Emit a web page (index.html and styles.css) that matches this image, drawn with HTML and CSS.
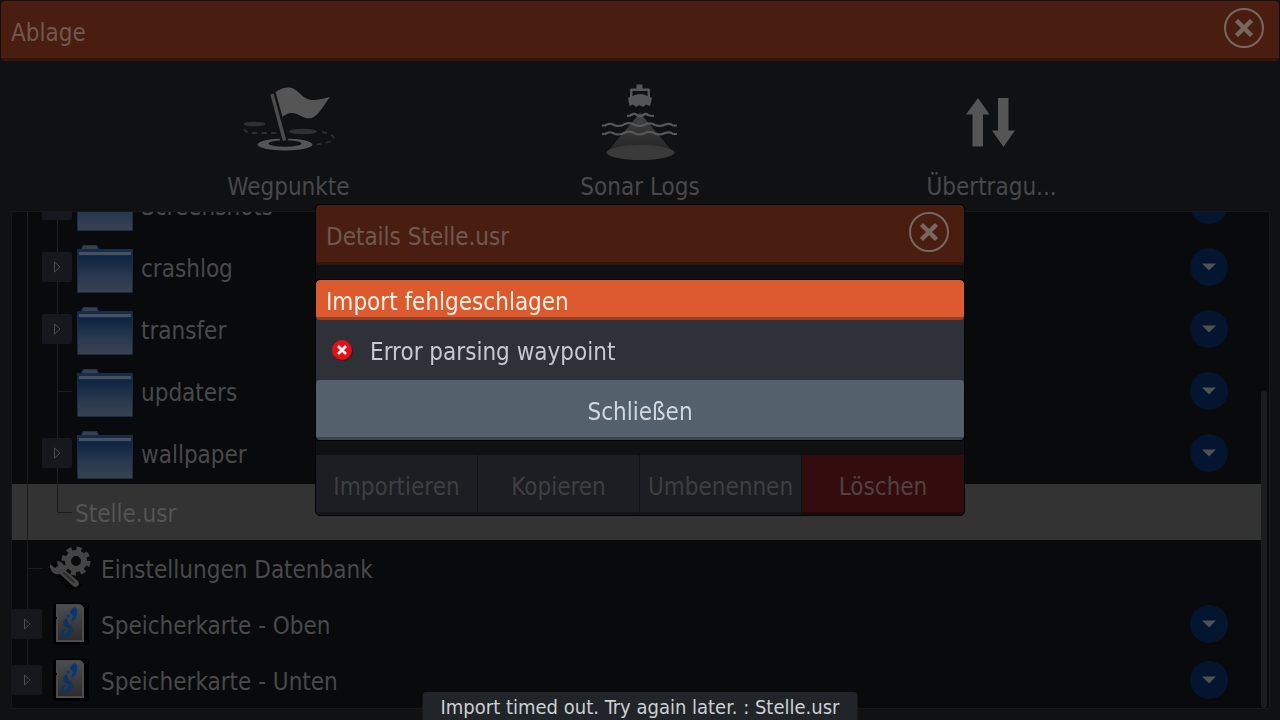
FILE: index.html
```html
<!doctype html>
<html lang="de">
  <head>
    <meta charset="UTF-8" />
    <meta name="viewport" content="width=device-width, initial-scale=1.0" />
    <title>Ablage</title>
    <link rel="stylesheet" href="styles.css" />
  </head>
  <body>
    <svg class="sprite" aria-hidden="true">
      <defs>
        <linearGradient id="folderFill" x1="0" y1="0" x2="0" y2="1">
          <stop offset="0" stop-color="#0d2442" />
          <stop offset="0.6" stop-color="#2b3a50" />
          <stop offset="1" stop-color="#39424f" />
        </linearGradient>
        <linearGradient id="cardFill" x1="0" y1="0" x2="0" y2="1">
          <stop offset="0" stop-color="#4d4d4d" />
          <stop offset="1" stop-color="#2b2b2b" />
        </linearGradient>
        <linearGradient id="beamFill" x1="0" y1="0" x2="0" y2="1">
          <stop offset="0" stop-color="#444444" />
          <stop offset="1" stop-color="#242425" />
        </linearGradient>
      </defs>
      <symbol id="close" viewBox="0 0 40 40">
        <circle cx="20" cy="20" r="19" fill="none" stroke="currentColor" stroke-width="2" />
        <path d="M12.500 12.500L27.500 27.500M27.500 12.500L12.500 27.500" stroke="currentColor" stroke-width="4.500" />
      </symbol>
      <symbol id="triangle" viewBox="0 0 8 12">
        <path d="M1.500 1L7 6L1.500 11Z" fill="none" stroke="currentColor" />
      </symbol>
      <symbol id="folder" viewBox="0 0 56 50">
        <path d="M4 5L6 1H20L22 5Z" fill="#253447" />
        <path d="M7 2H19L21 5H5Z" fill="#37424f" />
        <rect x="0" y="5" width="56" height="44" rx="1" fill="#182c47" />
        <rect x="2" y="8" width="52" height="3" fill="#46515f" />
        <rect x="1" y="12" width="54" height="36" fill="url(#folderFill)" />
      </symbol>
      <symbol id="card" viewBox="0 0 46 44">
        <rect x="6" y="1" width="36" height="42" rx="4" fill="#000" />
        <path d="M10 3H33L36 6V39H10V18L11 17V15L10 14Z" fill="url(#cardFill)" stroke="#4b4b4b" stroke-width="2" />
        <path d="M25 7C28 4 31 6 30 11C30 15 28 19 24 20C25 16 27 13 24 12C22 11 23 8 25 7Z" fill="#06397c" />
        <path d="M19 17C17 19 16 22 18 24C20 26 24 25 23 28C22 31 18 32 16 35C20 34 24 33 25 29C27 24 19 23 20 20Z" fill="#0a3564" stroke="#0a3564" stroke-width="1.500" />
        <circle cx="21" cy="14" r="1.800" fill="#0a3a75" />
        <path d="M17 28L15 32" stroke="#0a3564" stroke-width="2.500" stroke-linecap="round" />
      </symbol>
      <symbol id="down" viewBox="0 0 14 8">
        <path d="M0 0.500H14L7 7.500Z" fill="currentColor" />
      </symbol>
    </svg>

    <header class="bar">
      <h1 class="title">Ablage</h1>
      <button class="close" aria-label="Ablage beenden"><svg><use href="#close" /></svg></button>
    </header>

    <nav class="toolbar">
      <button class="tool">
        <svg viewBox="240 82 96 80">
          <ellipse cx="254.500" cy="124" rx="11" ry="2.300" fill="#303031" />
          <ellipse cx="303" cy="131.500" rx="14" ry="2.800" fill="#303031" />
          <path d="M244 129Q246 133 253 133H281M322 132Q334 134 334 139Q331 143 312 145" fill="none" stroke="#303031" stroke-width="1.800" stroke-dasharray="5 4.500" />
          <path fill-rule="evenodd" d="M257.500 144.500a27.500 6 0 1 0 55 0a27.500 6 0 1 0 -55 0ZM268.500 143.500a16.500 3.200 0 1 0 33 0a16.500 3.200 0 1 0 -33 0Z" fill="#555556" />
          <path d="M272 94L284.500 141" stroke="#101112" stroke-width="8" />
          <path d="M272 94L284.500 140.500" stroke="#4b4b4c" stroke-width="3.500" />
          <path d="M275.500 92C281 88 289 86 294 89C301 93 303 99 312 100C318 100 325 98 330 97C325 103 320 114 312 118C303 120 299 112 290 113C287 114 284 115 282.500 117Z" fill="#555556" />
        </svg>
        <span>Wegpunkte</span>
      </button>
      <button class="tool">
        <svg viewBox="592 82 96 80">
          <path d="M640 113L673 152H607Z" fill="url(#beamFill)" />
          <ellipse cx="640.500" cy="152.500" rx="34" ry="7.500" fill="#3a3a3b" />
          <path d="M636.500 84.500H642.500V88.500H649Q650 88.500 650 90V97L652 98L650 106L646 104.500L643 107L639.500 105L636 107L633 104.500L629.500 106L628 98L630 97V90Q630 88.500 631 88.500H636.500ZM632.500 91V96Q640 92 647.500 96V91Z" fill="#565657" fill-rule="evenodd" />
          <path d="M627 116Q630 116 632 114.500Q634 113 637 115Q640 117 643 115Q646 113 648 115Q650 116 654 116M602 125.500H605Q610 122 615 125.500Q620 127 625 124Q630 122 635 125Q640 127 645 124.500Q650 122 655 125Q660 127 665 124.500Q670 123 673 125.500H677M602 134H605Q610 130.500 615 134Q620 135.500 625 132.500Q630 130.500 635 133.500Q640 135.500 645 133Q650 130.500 655 133.500Q660 135.500 665 133Q670 131.500 673 134H677" fill="none" stroke="#58585a" stroke-width="2.200" />
        </svg>
        <span>Sonar Logs</span>
      </button>
      <button class="tool">
        <svg viewBox="944 82 96 80">
          <path d="M978 98L989.500 114.500H983V146.500H972.500V114.500H966ZM998 98H1008.500V130.500H1015L1003.500 147L992 130.500H998Z" fill="#555556" />
        </svg>
        <span>Übertragu...</span>
      </button>
    </nav>

    <main class="browser">
      <ul class="tree">
        <li class="row folder-row">
          <span class="branch line"></span>
          <span class="branch line"><button class="expand" aria-label="Screenshots öffnen"><svg><use href="#triangle" /></svg></button></span>
          <svg class="folder"><use href="#folder" /></svg>
          <span class="name">Screenshots</span>
          <button class="menu" aria-label="Menü Screenshots"><svg><use href="#down" /></svg></button>
        </li>
        <li class="row folder-row">
          <span class="branch line"></span>
          <span class="branch line"><button class="expand" aria-label="crashlog öffnen"><svg><use href="#triangle" /></svg></button></span>
          <svg class="folder"><use href="#folder" /></svg>
          <span class="name">crashlog</span>
          <button class="menu" aria-label="Menü crashlog"><svg><use href="#down" /></svg></button>
        </li>
        <li class="row folder-row">
          <span class="branch line"></span>
          <span class="branch line"><button class="expand" aria-label="transfer öffnen"><svg><use href="#triangle" /></svg></button></span>
          <svg class="folder"><use href="#folder" /></svg>
          <span class="name">transfer</span>
          <button class="menu" aria-label="Menü transfer"><svg><use href="#down" /></svg></button>
        </li>
        <li class="row folder-row">
          <span class="branch line"></span>
          <span class="branch line tick"></span>
          <svg class="folder"><use href="#folder" /></svg>
          <span class="name">updaters</span>
          <button class="menu" aria-label="Menü updaters"><svg><use href="#down" /></svg></button>
        </li>
        <li class="row folder-row">
          <span class="branch line"></span>
          <span class="branch line"><button class="expand" aria-label="wallpaper öffnen"><svg><use href="#triangle" /></svg></button></span>
          <svg class="folder"><use href="#folder" /></svg>
          <span class="name">wallpaper</span>
          <button class="menu" aria-label="Menü wallpaper"><svg><use href="#down" /></svg></button>
        </li>
        <li class="row selected">
          <span class="branch line"></span>
          <span class="branch tick last"></span>
          <span class="name">Stelle.usr</span>
        </li>
        <li class="row">
          <span class="branch line tick"></span>
          <svg class="icon" viewBox="0 0 46 44">
            <path d="M6 19L31 43" stroke="#000" stroke-width="12" opacity="0.6" />
            <circle cx="29" cy="15" r="8" fill="none" stroke="#444" stroke-width="6" />
            <circle cx="29" cy="15" r="12" fill="none" stroke="#444" stroke-width="5" stroke-dasharray="5 4.425" />
            <path d="M3 18L8 22L11 20L10 15C15 15 18 19 17 23L31 35C34 39 29 43 26 40L13 28C8 30 2 25 3 18Z" fill="#444" />
            <path d="M17 27L27 36" stroke="#292929" stroke-width="2" stroke-linecap="round" />
          </svg>
          <span class="name">Einstellungen Datenbank</span>
        </li>
        <li class="row">
          <span class="branch line"><button class="expand" aria-label="Speicherkarte - Oben öffnen"><svg><use href="#triangle" /></svg></button></span>
          <svg class="icon"><use href="#card" /></svg>
          <span class="name">Speicherkarte - Oben</span>
          <button class="menu" aria-label="Menü Speicherkarte - Oben"><svg><use href="#down" /></svg></button>
        </li>
        <li class="row">
          <span class="branch last"><button class="expand" aria-label="Speicherkarte - Unten öffnen"><svg><use href="#triangle" /></svg></button></span>
          <svg class="icon"><use href="#card" /></svg>
          <span class="name">Speicherkarte - Unten</span>
          <button class="menu" aria-label="Menü Speicherkarte - Unten"><svg><use href="#down" /></svg></button>
        </li>
      </ul>
      <div class="scrollbar"><div class="thumb"></div></div>
    </main>

    <div class="overlay">
      <section class="dialog details" role="dialog" aria-labelledby="detailsTitle">
        <header class="bar">
          <h2 class="title" id="detailsTitle">Details Stelle.usr</h2>
          <button class="close" aria-label="Details beenden"><svg><use href="#close" /></svg></button>
        </header>
        <div class="details-body"></div>
        <footer class="actions">
          <button>Importieren</button>
          <button>Kopieren</button>
          <button>Umbenennen</button>
          <button class="delete">Löschen</button>
        </footer>
      </section>
    </div>

    <div class="overlay">
      <section class="dialog alert" role="alertdialog" aria-labelledby="alertTitle">
        <h2 class="alert-title" id="alertTitle">Import fehlgeschlagen</h2>
        <p class="alert-message">
          <svg viewBox="0 0 24 24">
            <circle cx="13" cy="13" r="10" fill="#15171b" opacity="0.6" />
            <circle cx="12" cy="12" r="10" fill="#f00a12" />
            <path d="M8 8L16 16M16 8L8 16" stroke="#fff" stroke-width="2.800" />
          </svg>
          <span class="name">Error parsing waypoint</span>
        </p>
        <button class="dismiss">Schließen</button>
      </section>
    </div>

    <div class="toast" role="status">Import timed out. Try again later. : Stelle.usr</div>
  </body>
</html>
```
FILE: styles.css
```css
:root {
  --text: #484949;
  --orange-dim: #491e10;
  --orange-dim-edge: #34150c;
}

* {
  box-sizing: border-box;
}

body {
  margin: 0;
  height: 100vh;
  display: flex;
  flex-direction: column;
  overflow: hidden;
  background: #101113;
  color: var(--text);
  font-family: "DejaVu Sans Condensed", Tahoma, sans-serif;
  font-size: 24px;
  line-height: 32px;
}

h1,
h2,
p,
ul {
  margin: 0;
  padding: 0;
}

button {
  font: inherit;
  color: inherit;
  background: none;
  border: none;
  padding: 0;
  cursor: pointer;
}

svg {
  display: block;
  flex: none;
}

.sprite {
  position: absolute;
  width: 0;
  height: 0;
}

.bar {
  display: flex;
  align-items: center;
  justify-content: space-between;
  height: 60px;
  padding: 0 15px 0 10px;
  background: var(--orange-dim);
  border-bottom: 3px solid var(--orange-dim-edge);
  border-radius: 4px;
  color: #6f5850;
}

body > .bar {
  margin: 1px 1px 0;
}

.title {
  padding-top: 6px;
  font-size: 24px;
  font-weight: 400;
}

.close {
  margin-bottom: 3px;
  color: #77685f;
}

.close svg {
  width: 40px;
  height: 40px;
}

.toolbar {
  display: grid;
  grid-template-columns: repeat(3, 1fr);
  height: 150px;
  padding: 21px 8.8% 0;
}

.tool {
  display: flex;
  flex-direction: column;
  align-items: center;
  gap: 9px;
}

.tool svg {
  width: 96px;
  height: 80px;
}

.browser {
  flex: 1;
  min-height: 0;
  display: flex;
  margin: 0 10px 11px 11px;
  background: #090a0b;
  border: 1px solid #17181a;
  border-radius: 3px;
}

.tree {
  flex: 1;
  display: flex;
  flex-direction: column;
  justify-content: flex-end;
  overflow: hidden;
  list-style: none;
}

.row {
  flex: none;
  display: flex;
  align-items: center;
  height: 56px;
}

.folder-row {
  height: 62px;
}

.selected {
  background: #333333;
  color: #545454;
}

.name {
  padding-top: 4px;
}

.selected .name {
  margin-left: 3px;
}

.branch {
  --line: linear-gradient(#1d1e20, #1d1e20);
  display: flex;
  align-items: center;
  width: 30px;
  height: 100%;
  background-repeat: no-repeat;
}

.line {
  background-image: var(--line);
  background-size: 1px 100%;
  background-position: 15px 0;
}

.tick {
  background-image: var(--line), var(--line);
  background-size: 1px 100%, 15px 1px;
  background-position: 15px 0, 15px center;
}

.last {
  background-image: var(--line);
  background-size: 1px 50%;
  background-position: 15px 0;
}

.tick.last {
  background-image: var(--line), var(--line);
  background-size: 1px 50%, 15px 1px;
  background-position: 15px 0, 15px center;
}

.selected .branch {
  --line: linear-gradient(#1c1c1c, #1c1c1c);
}

.expand {
  display: grid;
  place-items: center;
  width: 30px;
  height: 30px;
  background: #17181d;
  border-radius: 2px;
  color: #4b4c4f;
}

.expand svg {
  width: 8px;
  height: 12px;
}

.folder {
  width: 56px;
  height: 50px;
  margin: 3px 8px 0 5px;
}

.icon {
  width: 46px;
  height: 44px;
  margin: 0 8px 0 5px;
}

.menu {
  display: grid;
  place-items: center;
  width: 38px;
  height: 38px;
  margin: 0 33px 0 auto;
  background: #03152f;
  border-radius: 50%;
  color: #4d5355;
}

.menu svg {
  width: 14px;
  height: 8px;
}

.scrollbar {
  display: flex;
  align-items: flex-end;
  width: 8px;
}

.thumb {
  width: 6px;
  height: 64%;
  background: #1b1c1e;
  border-radius: 3px;
}

.overlay {
  position: fixed;
  inset: 0;
  display: grid;
  place-items: center;
}

.dialog {
  width: 650px;
  max-width: 100%;
  background: #0e1011;
  border: 1px solid #000000;
  border-radius: 5px;
  overflow: hidden;
}

.details-body {
  height: 190px;
}

.actions {
  display: grid;
  grid-template-columns: repeat(4, 1fr);
}

.actions button {
  height: 60px;
  padding-top: 6px;
  background: #1c1e23;
  border-right: 1px solid #111215;
  border-bottom: 3px solid #141518;
  color: #3e3f41;
}

.actions .delete {
  background: #330d0e;
  border-right: none;
  border-bottom-color: #1d0b0c;
  color: #514141;
}

.alert {
  background: #2e3138;
}

.alert-title {
  height: 40px;
  padding: 6px 10px 0;
  background: #dc5a2d;
  border-bottom: 3px solid #9c3e22;
  border-radius: 4px;
  color: #fff3e6;
  font-size: 24px;
  font-weight: 400;
}

.alert-message {
  display: flex;
  align-items: center;
  gap: 16px;
  height: 60px;
  padding: 0 14px;
  color: #c5c9d2;
}

.alert-message svg {
  width: 24px;
  height: 24px;
}

.dismiss {
  display: block;
  width: 100%;
  height: 60px;
  padding-top: 6px;
  background: #54606c;
  border-bottom: 3px solid #3b444d;
  border-radius: 4px;
  color: #d0d8df;
}

.toast {
  position: fixed;
  bottom: 0;
  left: 50%;
  transform: translateX(-50%);
  padding: 2px 18px 0;
  background: #212529;
  border-radius: 4px 4px 0 0;
  color: #ccd0d3;
  font-size: 20px;
  line-height: 26px;
  white-space: nowrap;
}
```
